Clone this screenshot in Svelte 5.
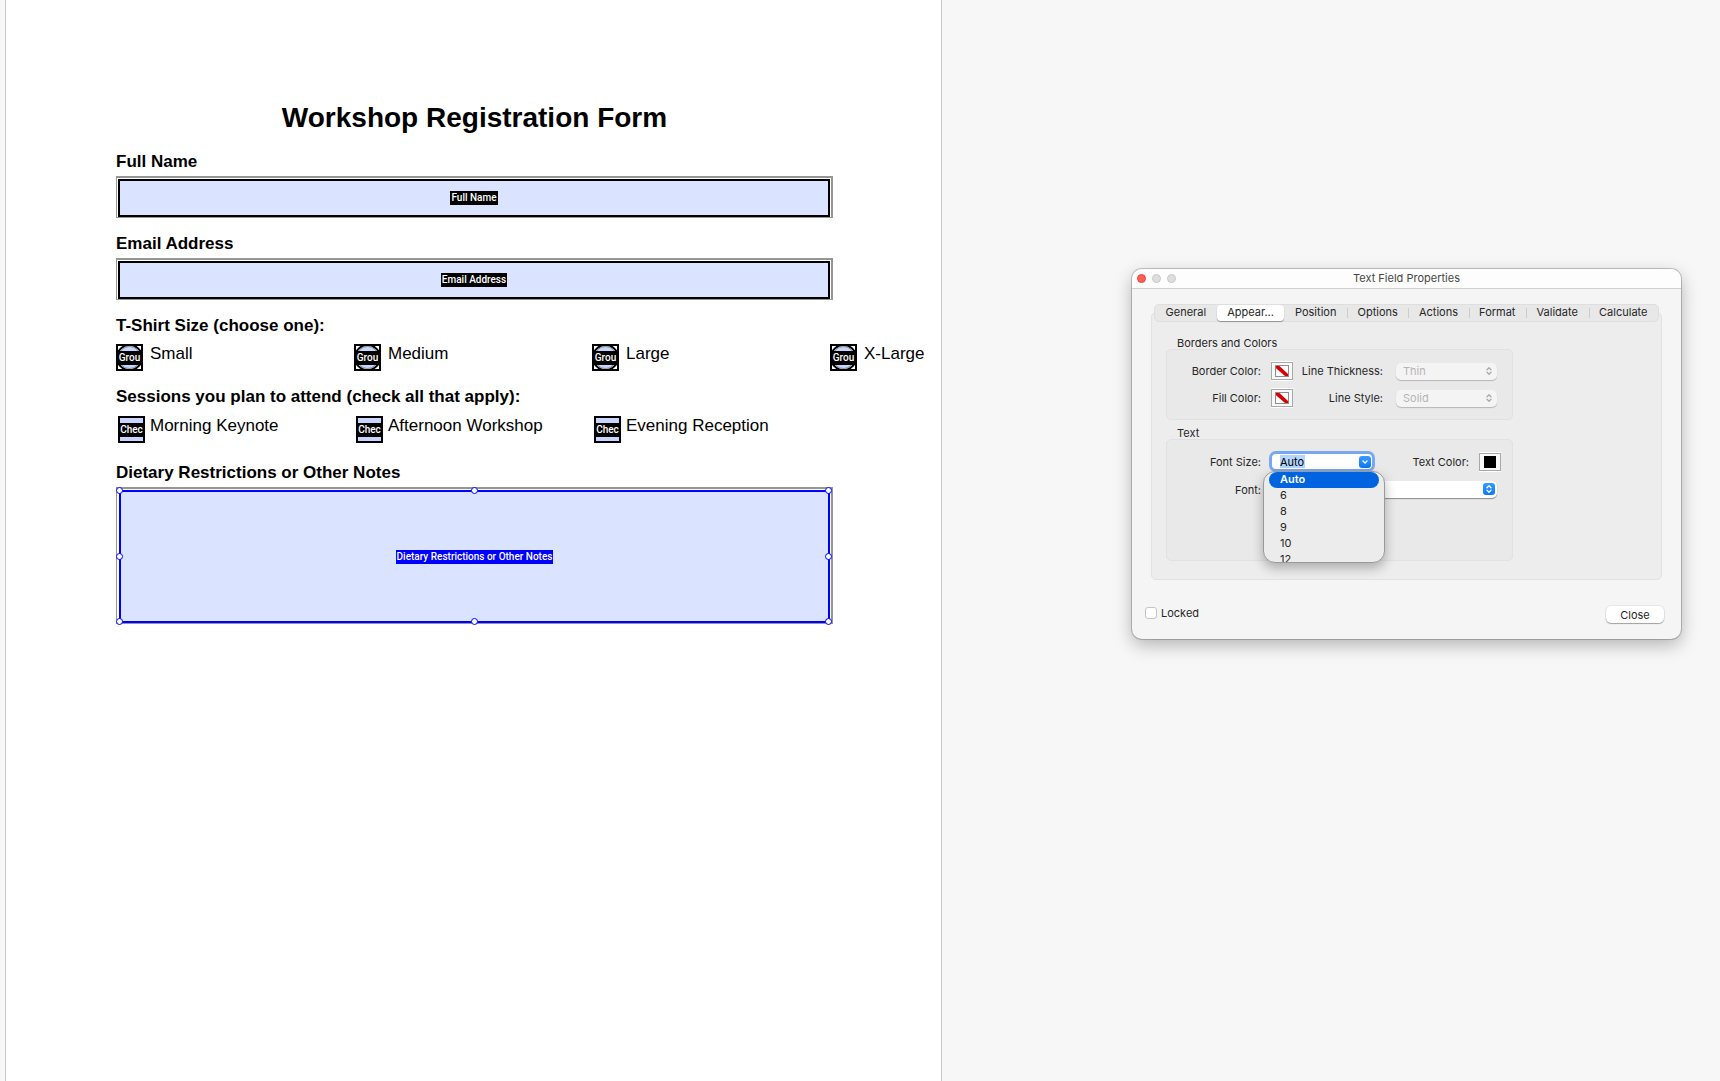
<script lang="ts">
  const textFields = [
    { id: "full-name", label: "Full Name", type: "text" },
    { id: "email", label: "Email Address", type: "email" },
  ];
  const sizes = ["Small", "Medium", "Large", "X-Large"];
  const sessions = ["Morning Keynote", "Afternoon Workshop", "Evening Reception"];
  const handles = ["nw", "n", "ne", "w", "e", "sw", "s", "se"];

  const tabs = ["General", "Appear...", "Position", "Options", "Actions", "Format", "Validate", "Calculate"];
  const fontSizes = ["Auto", "6", "8", "9", "10", "12"];

  let activeTab = $state("Appear...");
  let fontSize = $state("Auto");
  let locked = $state(false);
</script>

{#snippet noColor()}
  <svg width="14" height="12" viewBox="0 0 14 12" aria-hidden="true">
    <rect x="0.5" y="0.5" width="13" height="11" fill="#fff" stroke="#8e8e8e" />
    <path d="M1 1h3.500l8.500 8v2h-3L1 3.200z" fill="#d90000" />
  </svg>
{/snippet}

{#snippet stepper(color: string)}
  <svg width="6" height="8" viewBox="0 0 6 8" fill="none" stroke={color} stroke-width="1.300" stroke-linecap="round" stroke-linejoin="round" aria-hidden="true">
    <path d="M1 2.800 3 0.800l2 2M1 5.200l2 2 2-2" />
  </svg>
{/snippet}

<div class="workspace">
  <main class="sheet">
    <h1>Workshop Registration Form</h1>

    {#each textFields as field}
      <section>
        <label class="heading" for={field.id}>{field.label}</label>
        <div class="frame">
          <div class="field">
            <input id={field.id} type={field.type} />
            <span class="tag">{field.label}</span>
          </div>
        </div>
      </section>
    {/each}

    <section>
      <h2 class="heading" id="size-heading">T-Shirt Size (choose one):</h2>
      <div class="choices" role="radiogroup" aria-labelledby="size-heading">
        {#each sizes as size}
          <label class="choice">
            <span class="widget">
              <input type="radio" name="size" value={size} />
              <svg width="23" height="23" viewBox="0 0 23 23" aria-hidden="true">
                <rect width="23" height="23" fill="#fff" />
                <circle cx="11.500" cy="11.500" r="12.500" fill="#c6d6fc" stroke="#000" stroke-width="2" />
                <circle cx="11.500" cy="11.500" r="11" fill="none" stroke="#8b8f99" />
              </svg>
              <span class="tag">Grou</span>
            </span>
            {size}
          </label>
        {/each}
      </div>
    </section>

    <section>
      <h2 class="heading" id="session-heading">Sessions you plan to attend (check all that apply):</h2>
      <div class="choices checks" role="group" aria-labelledby="session-heading">
        {#each sessions as session}
          <label class="choice">
            <span class="widget">
              <input type="checkbox" name="session" value={session} />
              <span class="tag">Chec</span>
            </span>
            {session}
          </label>
        {/each}
      </div>
    </section>

    <section>
      <label class="heading" for="notes">Dietary Restrictions or Other Notes</label>
      <div class="frame">
        <div class="field selected">
          <textarea id="notes"></textarea>
          <span class="tag">Dietary Restrictions or Other Notes</span>
          {#each handles as handle}
            <i class="handle {handle}"></i>
          {/each}
        </div>
      </div>
    </section>
  </main>

  <aside>
    <div class="dialog" role="dialog" aria-labelledby="dialog-title">
      <header>
        <div class="lights">
          <button class="light close" aria-label="Close window"></button>
          <button class="light" aria-label="Minimize" disabled></button>
          <button class="light" aria-label="Zoom" disabled></button>
        </div>
        <span id="dialog-title">Text Field Properties</span>
      </header>

      <div class="body">
        <div class="tabs" role="tablist">
          {#each tabs as tab}
            <button role="tab" class:active={tab === activeTab} aria-selected={tab === activeTab} onclick={() => (activeTab = tab)}>{tab}</button>
          {/each}
        </div>

        <div class="panel" role="tabpanel">
          <h3>Borders and Colors</h3>
          <div class="group">
            <label for="border-color">Border Color:</label>
            <button id="border-color" class="swatch">{@render noColor()}</button>
            <label for="thickness">Line Thickness:</label>
            <div class="popup">
              <select id="thickness" disabled><option>Thin</option></select>
              <span class="arrows">{@render stepper("#a9a9a9")}</span>
            </div>

            <label for="fill-color">Fill Color:</label>
            <button id="fill-color" class="swatch">{@render noColor()}</button>
            <label for="line-style">Line Style:</label>
            <div class="popup">
              <select id="line-style" disabled><option>Solid</option></select>
              <span class="arrows">{@render stepper("#a9a9a9")}</span>
            </div>
          </div>

          <h3>Text</h3>
          <div class="group text-group">
            <label for="font-size">Font Size:</label>
            <div class="size-row">
              <div class="combo">
                <span class="value">
                  <input id="font-size" role="combobox" aria-expanded="true" aria-controls="size-list" size="4" bind:value={fontSize} />
                </span>
                <button class="blue" aria-label="Show font sizes">
                  <svg width="6" height="4" viewBox="0 0 6 4" fill="none" stroke="#fff" stroke-width="1.400" stroke-linecap="round" stroke-linejoin="round"><path d="M1 1l2 2 2-2" /></svg>
                </button>
                <div class="list" id="size-list" role="listbox">
                  {#each fontSizes as size}
                    <button role="option" aria-selected={size === fontSize} class:picked={size === fontSize} onclick={() => (fontSize = size)}>{size}</button>
                  {/each}
                </div>
              </div>
              <label for="text-color">Text Color:</label>
              <button id="text-color" class="swatch"><span class="ink"></span></button>
            </div>

            <label for="font">Font:</label>
            <div class="popup font">
              <select id="font"><option value=""></option></select>
              <span class="arrows blue">{@render stepper("#fff")}</span>
            </div>
          </div>
        </div>

        <footer>
          <label class="locked"><input type="checkbox" bind:checked={locked} />Locked</label>
          <button class="push">Close</button>
        </footer>
      </div>
    </div>
  </aside>
</div>

<style>
  :global(body) {
    background: #f7f7f7;
  }

  .workspace {
    display: grid;
    grid-template-columns: minmax(0, 937fr) minmax(0, 778fr);
    min-height: 100vh;
    padding-left: 5px;
    box-sizing: border-box;
  }

  input,
  textarea,
  select,
  button {
    appearance: none;
    margin: 0;
    padding: 0;
    border: 0;
    border-radius: 0;
    outline: none;
    box-sizing: border-box;
    background: none;
    color: inherit;
    font: inherit;
  }

  svg {
    display: block;
  }

  /* form page */

  .sheet {
    padding: 102px 108px 0 110px;
    border: solid #c8c8c8;
    border-width: 0 1px;
    background: #fff;
    color: #000;
    font: 17px/20px "Liberation Sans", Arial, sans-serif;
  }

  h1 {
    margin: 0 0 18px;
    font-size: 28px;
    line-height: 32px;
    text-align: center;
  }

  section {
    margin-bottom: 16px;
  }

  .heading {
    display: block;
    margin: 0;
    font-size: 17px;
    font-weight: bold;
  }

  .frame {
    margin-top: 4px;
    padding: 1px 1px 0;
    border: solid #969696;
    border-width: 2px 2px 1px 1px;
  }

  .field {
    position: relative;
    display: grid;
    align-items: center;
    justify-items: center;
    border: 2px solid #000;
    background: #dae3ff;
  }

  .field > input,
  .field > textarea,
  .field > .tag {
    grid-area: 1 / 1;
  }

  .field > input {
    width: 100%;
    height: 34px;
  }

  .field > textarea {
    display: block;
    width: 100%;
    height: 129px;
    resize: none;
  }

  .field.selected {
    margin-left: 1px;
    border-color: #00f;
  }

  .tag {
    padding: 0 1px;
    background: #000;
    color: #fff;
    font: 500 10px/14px Roboto, "Noto Sans", sans-serif;
    pointer-events: none;
  }

  .selected .tag {
    background: #00f;
  }

  .handle {
    position: absolute;
    width: 5px;
    height: 5px;
    border: 1px solid #00f;
    border-radius: 50%;
    background: #fff;
    transform: translate(-4px, -4px);
  }

  .handle.nw,
  .handle.n,
  .handle.ne {
    top: -1px;
  }

  .handle.w,
  .handle.e {
    top: 50%;
  }

  .handle.sw,
  .handle.s,
  .handle.se {
    top: calc(100% + 1px);
  }

  .handle.nw,
  .handle.w,
  .handle.sw {
    left: -1px;
  }

  .handle.n,
  .handle.s {
    left: 50%;
  }

  .handle.ne,
  .handle.e,
  .handle.se {
    left: calc(100% + 1px);
  }

  .choices {
    display: grid;
    grid-template-columns: repeat(4, 238px);
    margin-top: 8px;
  }

  .choice {
    display: flex;
    align-items: flex-start;
    gap: 7px;
    white-space: nowrap;
  }

  .widget {
    position: relative;
    flex: none;
    width: 27px;
    height: 27px;
    border: 2px solid #000;
    box-sizing: border-box;
    background: #c6d6fc;
    overflow: hidden;
  }

  .widget input {
    position: absolute;
    inset: 0;
  }

  .widget .tag {
    position: absolute;
    inset: 5px 0 auto;
    padding: 0;
    text-align: center;
  }

  .checks {
    margin: 9px 0 20px 2px;
  }

  .checks .choice {
    gap: 5px;
  }

  /* properties window */

  aside {
    padding: 269px 39px 40px 190px;
    color: #262626;
    font: 11px/14px Inter, "Liberation Sans", sans-serif;
  }

  .dialog {
    border-radius: 10px;
    background: #f5f5f5;
    box-shadow:
      0 0 0 1px rgba(0, 0, 0, 0.2),
      0 6px 18px rgba(0, 0, 0, 0.28);
  }

  header {
    display: grid;
    grid-template-columns: 1fr auto 1fr;
    align-items: center;
    height: 19px;
    padding: 0 5px;
    border-bottom: 1px solid #cfcfcf;
    border-radius: 10px 10px 0 0;
    background: #fdfdfd;
    color: #474747;
  }

  #dialog-title {
    padding-bottom: 2px;
  }

  .lights {
    display: flex;
    gap: 6px;
  }

  .light {
    width: 9px;
    height: 9px;
    border: 1px solid #c9c9c9;
    border-radius: 50%;
    background: #dedede;
  }

  .light.close {
    border-color: #e2463f;
    background: #fe5f57;
  }

  .body {
    padding: 15px 19px 16px;
  }

  .tabs {
    position: relative;
    display: flex;
    height: 18px;
    margin: 0 3px;
    border: 1px solid #dedede;
    border-radius: 5px;
    box-sizing: border-box;
    background: #e8e8e8;
  }

  .tabs button {
    position: relative;
    flex: 1 1 auto;
    height: 16px;
    padding-bottom: 2px;
    line-height: 14px;
    border-radius: 4px;
  }

  .tabs button + button:not(.active, .active + button)::before {
    content: "";
    position: absolute;
    left: 0;
    top: 3px;
    height: 10px;
    border-left: 1px solid #cdcdcd;
  }

  .tabs .active {
    background: #fff;
    box-shadow: 0 1px 1px rgba(0, 0, 0, 0.35);
  }

  .panel {
    margin-top: -10px;
    padding: 24px 148px 18px 14px;
    border: 1px solid #e2e2e2;
    border-radius: 5px;
    background: #ededed;
  }

  h3 {
    margin: 0 0 0 11px;
    font-size: 11px;
    font-weight: normal;
    line-height: 12px;
  }

  .group {
    display: grid;
    grid-template-columns: 94px 32px 90px minmax(0, 1fr);
    grid-auto-rows: 18px;
    align-items: center;
    row-gap: 9px;
    padding: 12px 15px 12px 0;
    border: 1px solid #e1e1e1;
    border-radius: 5px;
    background: #e9e9e9;
  }

  .group + h3 {
    margin-top: 7px;
  }

  .group label {
    text-align: right;
    white-space: nowrap;
  }

  .group .swatch {
    margin-left: 10px;
  }

  .swatch {
    display: grid;
    place-items: center;
    width: 22px;
    height: 18px;
    border: 1px solid #a8a8a8;
    background: #f9f9f9;
    box-shadow:
      0 1px #fff,
      0 -1px #fff;
  }

  .ink {
    width: 12px;
    height: 12px;
    background: #000;
  }

  .popup {
    position: relative;
    margin-left: 13px;
  }

  .popup select {
    display: block;
    width: 100%;
    height: 17px;
    padding: 0 20px 0 7px;
    border-radius: 5px;
    background: #f4f4f4;
    box-shadow: 0 1px 1px rgba(0, 0, 0, 0.22);
    color: #b4b4b4;
    opacity: 1;
  }

  .popup.font {
    margin-left: 10px;
  }

  .popup.font select {
    background: #fff;
    box-shadow: 0 1px 1px rgba(0, 0, 0, 0.4);
  }

  .arrows {
    position: absolute;
    right: 2px;
    top: 2px;
    display: grid;
    place-items: center;
    width: 12px;
    height: 12px;
    pointer-events: none;
  }

  .blue {
    display: grid;
    place-items: center;
    width: 12px;
    height: 12px;
    border-radius: 3px;
    background: linear-gradient(#3a9bff, #0a78f5);
  }

  .text-group {
    grid-template-columns: 94px minmax(0, 1fr);
    grid-auto-rows: 19px;
    padding-bottom: 61px;
  }

  .size-row {
    display: flex;
    align-items: center;
    justify-content: flex-end;
    margin-right: -4px;
  }

  .combo {
    position: relative;
    display: flex;
    align-items: center;
    justify-content: space-between;
    width: 100px;
    height: 15px;
    margin: 0 auto 0 11px;
    padding: 0 1px 0 8px;
    border-radius: 4px;
    box-sizing: border-box;
    background: #fff;
    box-shadow: 0 0 0 3px #77a8f0;
    color: #000;
  }

  .value input {
    display: block;
    width: 25px;
    height: 13px;
    background: #b3d7ff;
  }

  .list {
    position: absolute;
    z-index: 1;
    top: 17px;
    left: -9px;
    width: 122px;
    height: 92px;
    padding: 0 5px;
    border: 1px solid #9a9a9a;
    border-radius: 12px;
    box-sizing: border-box;
    background: #ececec;
    box-shadow: 0 5px 12px rgba(0, 0, 0, 0.28);
    color: #262626;
    overflow: hidden;
  }

  .list button {
    display: block;
    width: 100%;
    height: 16px;
    padding: 0 0 2px 11px;
    border-radius: 8px;
    line-height: 14px;
    text-align: left;
  }

  .list .picked {
    background: #0064e1;
    color: #fff;
    font-weight: 600;
  }

  footer {
    display: flex;
    align-items: flex-start;
    justify-content: space-between;
    margin: 26px -2px 0 -6px;
  }

  .locked {
    display: flex;
    align-items: center;
    gap: 4px;
  }

  .locked input {
    width: 12px;
    height: 12px;
    border: 1px solid #c4c4c4;
    border-radius: 3px;
    background: #fff;
  }

  .push {
    width: 58px;
    height: 17px;
    border-radius: 5px;
    background: #fff;
    box-shadow:
      0 0 0 1px rgba(0, 0, 0, 0.06),
      0 1px 1px rgba(0, 0, 0, 0.3);
  }
</style>
